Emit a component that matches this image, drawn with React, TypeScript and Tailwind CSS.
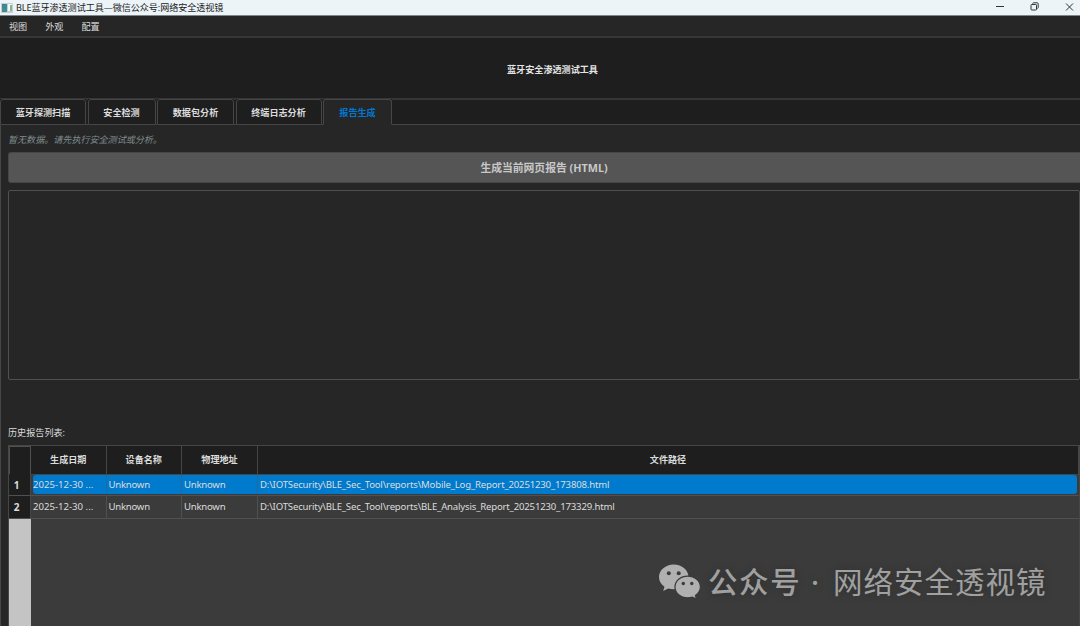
import React, { useState } from 'react';
import clsx from 'clsx';

const menus = ['视图', '外观', '配置'];

const tabs = [
  { label: '蓝牙探测扫描', width: 'w-[86px]' },
  { label: '安全检测', width: 'w-[68px]' },
  { label: '数据包分析', width: 'w-[77px]' },
  { label: '终端日志分析', width: 'w-[86px]' },
  { label: '报告生成', width: 'w-[69px]' },
];

const reports = [
  { date: '2025-12-30 ...', device: 'Unknown', mac: 'Unknown', path: 'D:\\IOTSecurity\\BLE_Sec_Tool\\reports\\Mobile_Log_Report_20251230_173808.html' },
  { date: '2025-12-30 ...', device: 'Unknown', mac: 'Unknown', path: 'D:\\IOTSecurity\\BLE_Sec_Tool\\reports\\BLE_Analysis_Report_20251230_173329.html' },
];

const TitleBar: React.FC = () => (
  <div className="h-4 shrink-0 bg-[#ecf4f8] border-b border-[#7e868b] flex items-center text-[#1c1c1c]">
    <svg className="w-3 h-[10px] ml-px shrink-0" viewBox="0 0 12 10">
      <rect width="12" height="10" fill="#c3cfd2" />
      <rect x="1" y="1" width="5" height="8" fill="#3f8f86" />
      <rect x="1" y="1" width="3" height="4" fill="#4b7da0" />
      <rect x="7" y="1" width="4" height="7" fill="#f4f8f8" />
      <rect x="9" y="2" width="2" height="6" fill="#7fb88f" />
    </svg>
    <span className="ml-[3px] text-[9.1px] leading-[14px] tracking-[-0.07px]">BLE蓝牙渗透测试工具—微信公众号:网络安全透视镜</span>
    <svg className="ml-auto w-[84px] h-[14px] shrink-0" viewBox="0 0 84 14" fill="none" stroke="#333" strokeWidth="1">
      <path d="M0 5.5h8" />
      <rect x="35" y="3.5" width="5.5" height="5.5" rx="0.8" />
      <path d="M36.500 2.500q.3-.7 1-.7h3.700q1 0 1 1v3.700q0 .8-.7 1" />
      <path d="M70 2.500l7 7M77 2.500l-7 7" />
    </svg>
  </div>
);

const TabBar: React.FC<{ active: number; onChange: (i: number) => void }> = ({ active, onChange }) => (
  <div className="h-[26px] shrink-0 flex bg-[#1e1e1e]">
    {tabs.map((tab, i) => (
      <React.Fragment key={tab.label}>
        {i > 0 && <div className="w-[1.5px] border-t border-t-[#363636] border-b border-b-[#464646]" />}
        <button
          onClick={() => onChange(i)}
          className={clsx(
            'shrink-0 border border-[#464646] rounded-t-[3px] text-[9.1px] leading-[25px] font-bold text-center',
            tab.width,
            i === active ? 'bg-[#262626] text-[#0078d0] border-b-[#262626]' : 'bg-[#1e1e1e] text-[#dcdcdc]',
          )}
        >
          {tab.label}
        </button>
      </React.Fragment>
    ))}
    <div className="flex-1 border-t border-t-[#363636] border-b border-b-[#464646]" />
  </div>
);

const ReportTable: React.FC = () => {
  const [selected, setSelected] = useState(0);

  return (
    <div className="flex-1 ml-[7px] border-l border-t border-r border-[#464646] bg-[#3b3b3b] flex flex-col text-[9.1px] text-[#dcdcdc] overflow-hidden">
      <div className="h-7 shrink-0 grid grid-cols-[22px_75.5px_75.5px_76px_1fr] bg-[#1e1e1e] font-bold text-center leading-[28px]">
        <div className="border border-[#505050]" />
        <div className="border-r border-b border-[#464646]">生成日期</div>
        <div className="border-r border-b border-[#464646]">设备名称</div>
        <div className="border-r border-b border-[#464646]">物理地址</div>
        <div className="border-r border-b border-[#464646]">文件路径</div>
      </div>
      {reports.map((report, i) => {
        const cell = clsx('pl-[2px] border-r whitespace-nowrap overflow-hidden', i === selected ? 'mt-px mb-px bg-[#007acc] border-[#226a9b]' : 'border-[#505050] pt-px');
        return (
          <div
            key={report.path}
            onClick={() => setSelected(i)}
            className={clsx(
              'shrink-0 grid grid-cols-[22px_75.5px_75.5px_76px_1fr] grid-rows-[100%] border-b border-[#505050] text-[9.6px]',
              i === 0 ? 'h-[22px] leading-[19.5px]' : 'h-[23px] leading-[20px]',
            )}
          >
            <div className="bg-[#1e1e1e] border-r border-[#464646] text-center pr-[6px] font-bold leading-[22px] text-[10px]">{i + 1}</div>
            <div className={clsx(cell, 'rounded-l-[3px] ml-[1.5px] pl-[0.5px]!')}>{report.date}</div>
            <div className={clsx(cell, 'tracking-[-0.25px]')}>{report.device}</div>
            <div className={clsx(cell, 'tracking-[-0.25px]')}>{report.mac}</div>
            <div className={clsx(cell, 'rounded-r-[3px] mr-[2px] border-r-0 tracking-[-0.185px]')}>{report.path}</div>
          </div>
        );
      })}
      <div className="flex-1 w-[22px] bg-[#c4c4c4]" />
    </div>
  );
};

const Watermark: React.FC = () => (
  <div className="absolute left-[658px] top-[561px] h-[42px] flex items-center text-[#a0a0a0] text-[29.5px] leading-[42px] whitespace-nowrap pointer-events-none [text-shadow:0_0_8px_rgba(0,0,0,0.25)]">
    <svg className="w-[43px] h-[38px] mb-[2px] shrink-0" viewBox="0 0 43 38" fill="#b0b0b0">
      <path d="M15.8 2.4C7.5 2.4 1 8 1 15c0 4 2.100 7.400 5.500 9.700L5.200 29l5-2.600c1.800.5 3.700.8 5.600.8C24 27.200 30.500 22 30.500 15S24 2.400 15.800 2.400z" />
      <path d="M29.700 14.200c-7.100 0-12.700 4.700-12.700 10.800s5.600 10.800 12.700 10.800c1.600 0 3.100-.2 4.500-.7l4.300 2-1.100-3.700c3.100-2 5-5 5-8.400 0-6.100-5.600-10.800-12.700-10.800z" stroke="#3b3b3b" strokeWidth="1.200" />
      <g fill="#3b3b3b">
        <circle cx="10.8" cy="11.3" r="2" />
        <circle cx="20.7" cy="11.3" r="2" />
        <circle cx="25.3" cy="21.5" r="1.7" />
        <circle cx="33.8" cy="21.5" r="1.7" />
      </g>
    </svg>
    <span className="ml-[7px] w-[93px] tracking-[1.6px] font-medium">公众号</span>
    <span className="w-[32px] text-center pr-[4px] font-medium">·</span>
    <span className="tracking-[1px]">网络安全透视镜</span>
  </div>
);

const App: React.FC = () => {
  const [activeTab, setActiveTab] = useState(4);

  return (
    <div className="relative w-[1080px] h-[626px] overflow-hidden flex flex-col bg-[#1e1e1e] font-['Noto_Sans','Noto_Sans_CJK_SC',sans-serif]">
      <TitleBar />
      <div className="h-[22px] shrink-0 bg-[#262626] border-b-2 border-[#363636] flex items-center gap-[18px] pl-[9px] pt-[2px] text-[9.1px] leading-[20px] text-[#dcdcdc]">
        {menus.map((menu) => (
          <span key={menu}>{menu}</span>
        ))}
      </div>
      <div className="h-[61px] shrink-0 border-b border-[#363636] pl-[25px] flex items-center justify-center text-[9.1px] font-bold text-[#e4e4e4]">
        <h1 className="pt-[3px]">蓝牙安全渗透测试工具</h1>
      </div>
      <TabBar active={activeTab} onChange={setActiveTab} />
      <div className="flex-1 flex flex-col bg-[#262626] border-l border-[#464646] min-h-0">
        <p className="h-[27px] shrink-0 pl-[7px] text-[9.1px] leading-[29px] tracking-[-0.04px] italic text-[#7f8c8d]">暂无数据。请先执行安全测试或分析。</p>
        <button className="h-[31px] shrink-0 ml-[7px] pr-px rounded-l-[3px] bg-[#555] border border-r-0 border-[#464646] text-[10.8px] leading-[29px] font-bold text-[#c8c8c8]">
          生成当前网页报告 (HTML)
        </button>
        <div className="h-[190px] shrink-0 mt-[7px] ml-[7px] rounded-[2px] border border-[#505050]" />
        <p className="mt-[43px] h-[22px] shrink-0 pl-[7px] text-[9.1px] leading-[19px] text-[#dcdcdc]">历史报告列表:</p>
        <ReportTable />
      </div>
      <Watermark />
    </div>
  );
};

export default App;
